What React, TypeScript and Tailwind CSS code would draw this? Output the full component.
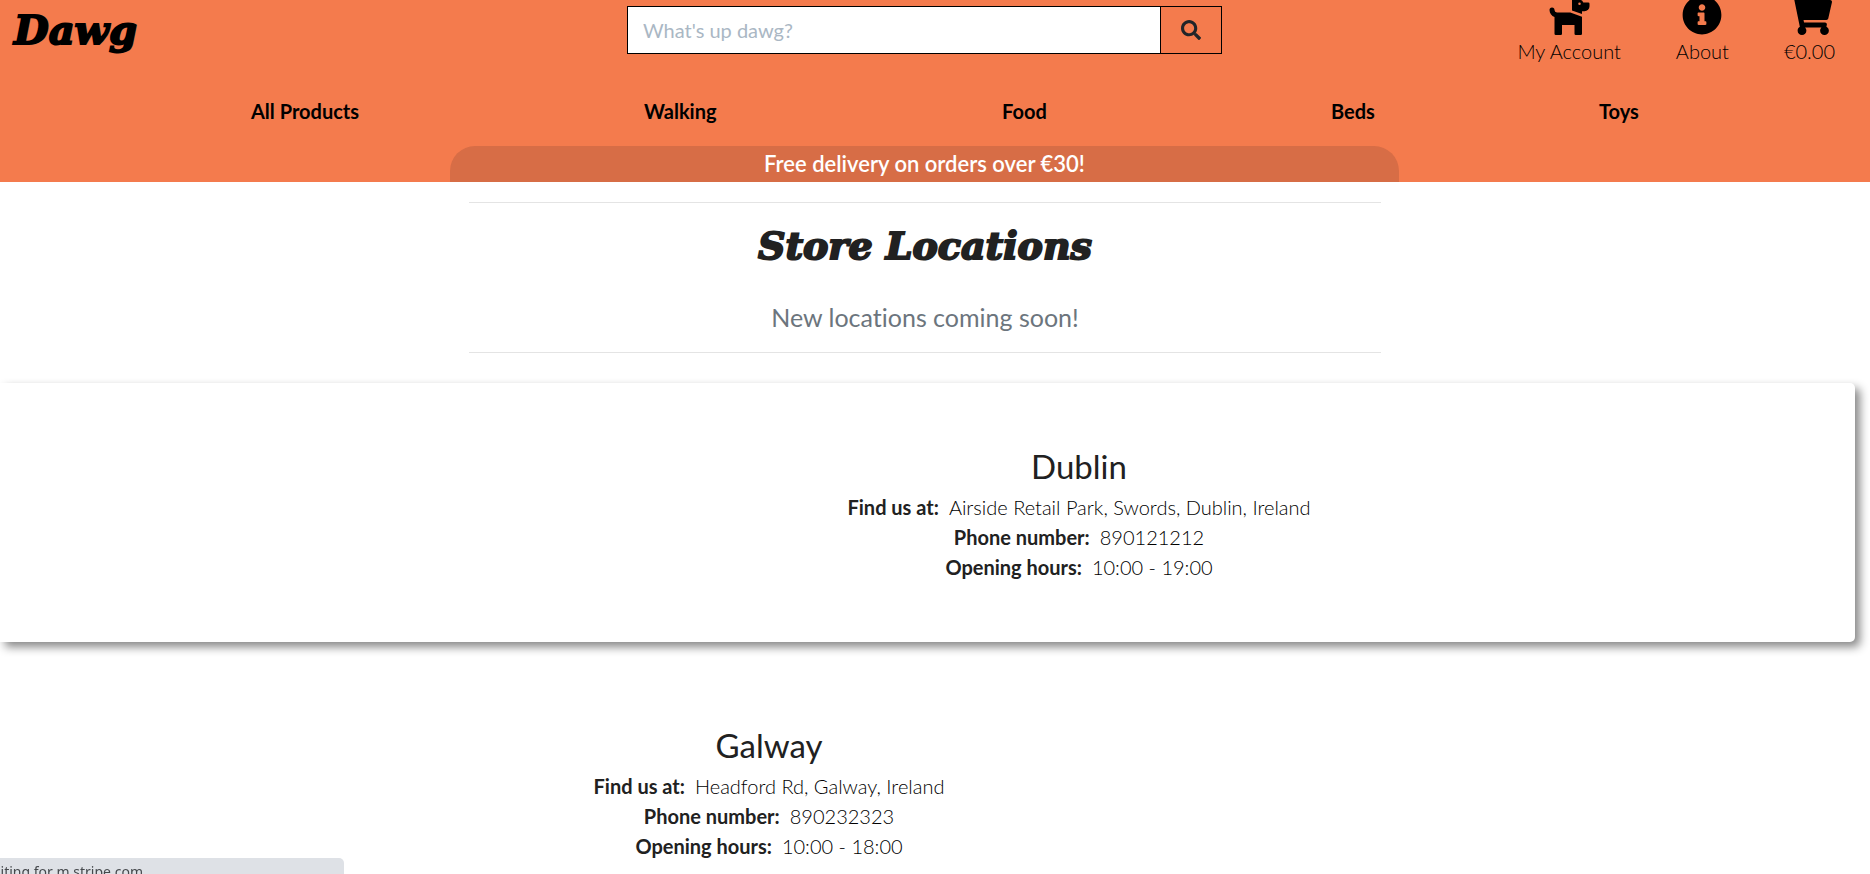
import type { ReactNode } from "react";
import { FaDog, FaInfoCircle, FaSearch, FaShoppingCart } from "react-icons/fa";

const categories = ["All Products", "Walking", "Food", "Beds", "Toys"];

const display =
  "font-['DejaVu_Serif',serif] leading-[44px] font-bold italic [-webkit-text-stroke:2px_currentColor]";

function UserLink({ icon, label }: { icon: ReactNode; label: string }) {
  return (
    <a href="#" className="flex flex-col items-center gap-[2px] font-light text-black">
      {icon}
      <span className="leading-7">{label}</span>
    </a>
  );
}

function Detail({ label, value }: { label: string; value: string }) {
  return (
    <div className="flex justify-center gap-[10px]">
      <dt className="font-bold">{label}</dt>
      <dd className="font-light text-black">{value}</dd>
    </div>
  );
}

function Store({ name, address, phone, hours }: { name: string; address: string; phone: string; hours: string }) {
  return (
    <div className="text-center">
      <h2 className="mb-[5px] text-[33px] leading-[42px]">{name}</h2>
      <dl className="leading-[30px]">
        <Detail label="Find us at:" value={address} />
        <Detail label="Phone number:" value={phone} />
        <Detail label="Opening hours:" value={hours} />
      </dl>
    </div>
  );
}

export default function App() {
  return (
    <div className="overflow-x-clip bg-white font-['Lato',sans-serif] text-[20px] text-[#212121] [font-variant-ligatures:none]">
      <header className="overflow-hidden bg-[#f47b4d]">
        <div className="grid grid-cols-[1fr_595px_1fr] grid-rows-[60px] items-center pr-[21px]">
          <a href="#" className={`pl-[14px] text-[40px] text-black ${display}`}>
            Dawg
          </a>
          <form className="flex h-12 border border-black" onSubmit={(e) => e.preventDefault()}>
            <input
              type="search"
              aria-label="Search products"
              placeholder="What's up dawg?"
              className="min-w-0 flex-1 bg-white px-[15px] outline-none placeholder:text-[#aab7c4]"
            />
            <button type="submit" aria-label="Search" className="flex w-[61px] items-center justify-center border-l border-black">
              <FaSearch size={20} color="#212529" />
            </button>
          </form>
          <div className="-mr-[21px] flex justify-end gap-[55px] pr-[35px]">
            <UserLink icon={<FaDog className="h-10 w-[45px]" />} label="My Account" />
            <UserLink icon={<FaInfoCircle className="h-10 w-10" />} label="About" />
            <UserLink icon={<FaShoppingCart className="h-10 w-[45px]" />} label="€0.00" />
          </div>
        </div>
        <nav className="pt-9 pb-5 pl-[251px]">
          <ul className="grid grid-cols-[393fr_358fr_329fr_268fr_271fr] leading-[30px] font-bold text-black">
            {categories.map((c) => (
              <li key={c}>
                <a href="#">{c}</a>
              </li>
            ))}
          </ul>
        </nav>
        <div className="pr-[21px]">
          <p className="mx-auto h-9 w-[949px] max-w-full rounded-t-[25px] bg-[#d76d46] text-center text-[22px] leading-9 font-semibold text-white">
            Free delivery on orders over €30!
          </p>
        </div>
      </header>

      <main>
        <div className="pt-5 pr-5">
          <div className="mx-auto w-[912px] max-w-full border-y border-[#e4e4e4] pt-[21px] pb-4 text-center">
            <h1 className={`text-[38px] ${display}`}>Store Locations</h1>
            <p className="mt-[30px] text-[25px] leading-[38px] text-[#6c757d]">New locations coming soon!</p>
          </div>
        </div>

        <section className="mt-[30px] mr-[15px] rounded-r-[5px] bg-white pt-[62px] pb-[60px] pl-[303px] shadow-[5px_5px_10px_#888888]">
          <Store
            name="Dublin"
            address="Airside Retail Park, Swords, Dublin, Ireland"
            phone="890121212"
            hours="10:00 - 19:00"
          />
        </section>
        <section className="mt-5 mr-[15px] pt-[62px] pr-[317px]">
          <Store name="Galway" address="Headford Rd, Galway, Ireland" phone="890232323" hours="10:00 - 18:00" />
        </section>
      </main>

      <div className="fixed bottom-0 left-0 h-4 w-[344px] overflow-hidden rounded-tr-[5px] bg-[#dee1e6]">
        <p className="-ml-5 pt-1 font-['Noto_Sans',sans-serif] text-[14px] leading-5 whitespace-nowrap text-[#45484c]">
          Waiting for m.stripe.com...
        </p>
      </div>
    </div>
  );
}
